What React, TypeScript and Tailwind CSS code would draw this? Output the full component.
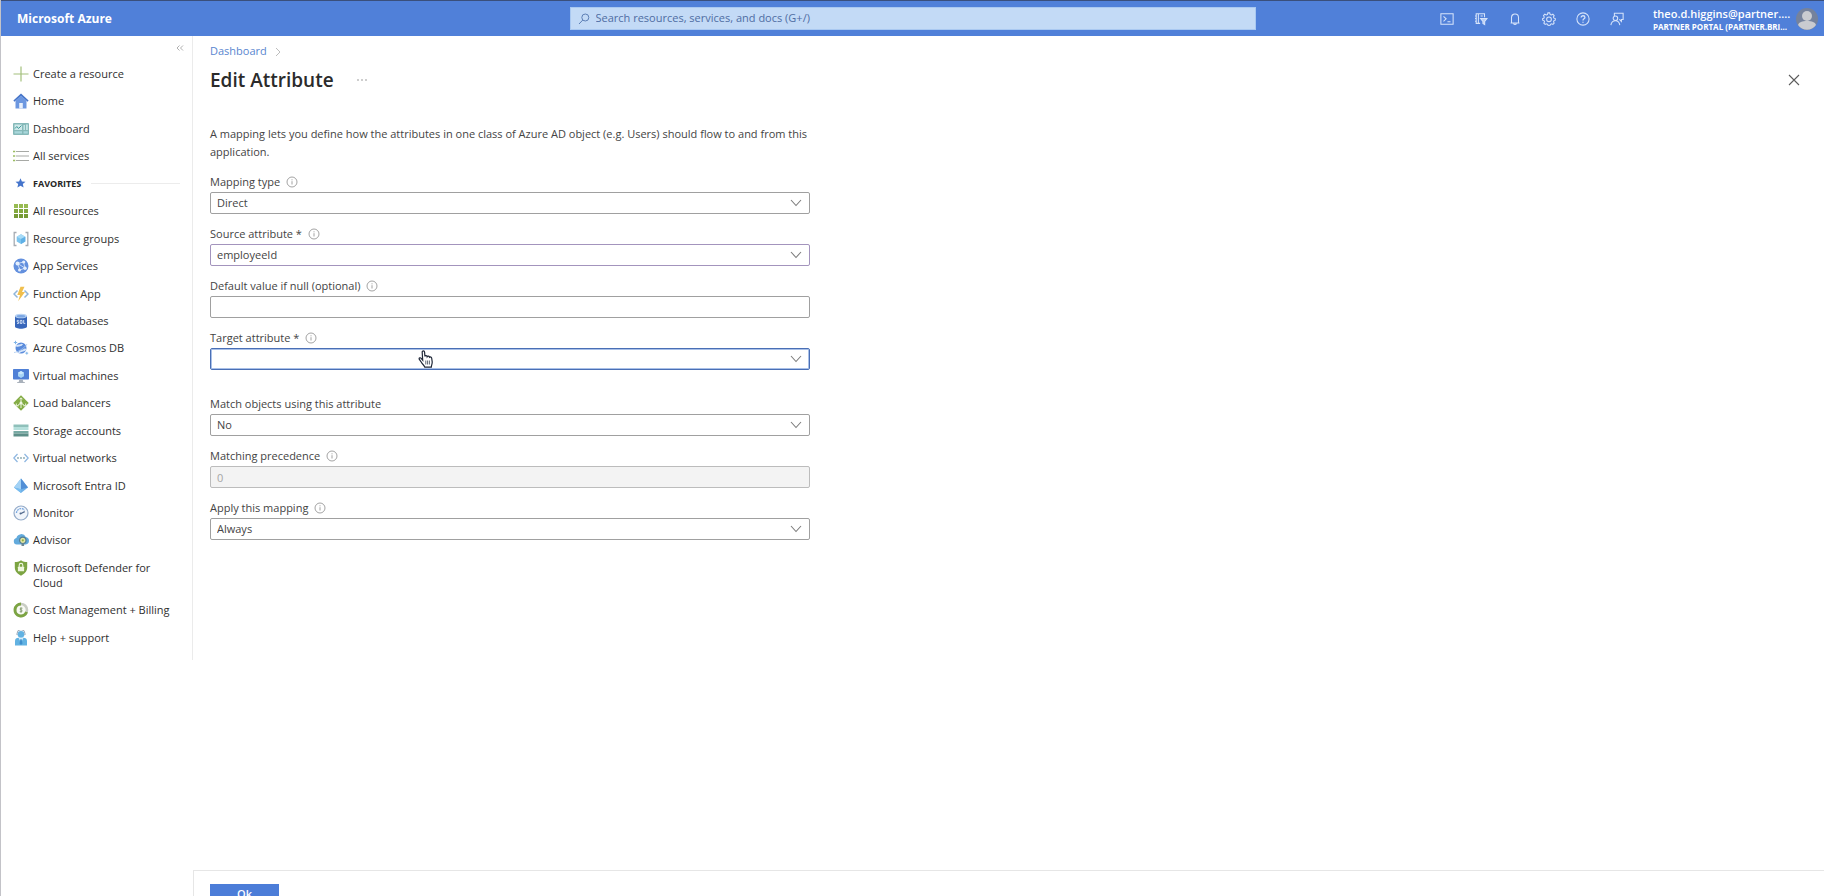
import type { ReactNode } from 'react';
import { clsx } from 'clsx';

const icon = 'block size-4 shrink-0';

const CreateIcon = () => (
  <svg viewBox="0 0 16 16" className={icon}>
    <path d="M8 .5v15M.5 8h15" stroke="#a3c07c" strokeWidth="1.2" fill="none" />
  </svg>
);

const HomeIcon = () => (
  <svg viewBox="0 0 16 16" className={icon}>
    <path d="M2.5 8h11v7.5h-11z" fill="#6c97e0" />
    <path d="M8 .5.4 7.6l1 1.2L8 3l6.6 5.8 1-1.2z" fill="#4674c8" />
    <path d="M8 2.6 3 7.3V9h10V7.3z" fill="#6c97e0" />
    <path d="M6.2 10h3.6v5.5H6.2z" fill="#e8effb" />
  </svg>
);

const DashboardIcon = () => (
  <svg viewBox="0 0 16 16" className={icon}>
    <rect x="0" y="2" width="16" height="12" rx="1" fill="#86b9b9" />
    <rect x="1.5" y="3.5" width="7.5" height="5.5" fill="#cfe9ea" />
    <path d="m2 7.5 1.8-2 1.7 2 3-3" stroke="#3f9a9a" strokeWidth="1" fill="none" />
    <path d="M10.5 4H12v5h-1.5zM13 3.500h1.800V9H13z" fill="#c8e6e6" />
    <path d="M1.5 10.3H9v2.2H1.500zM10.500 10.300h4.300v2.200h-4.300z" fill="#a9d8dc" />
  </svg>
);

const ServicesIcon = () => (
  <svg viewBox="0 0 16 16" className={icon}>
    <path d="M3 3.5h13M3 8h13M3 12.5h13" stroke="#a7a9a5" strokeWidth="1.2" />
    <path d="M0 3.5h2.200M0 8h2.200M0 12.500h2.200" stroke="#9bbd62" strokeWidth="1.6" />
  </svg>
);

const StarIcon = () => (
  <svg viewBox="0 0 16 16" className={icon}>
    <path d="m7.5 3.2 1.4 3.3 3.6.3-2.7 2.3.8 3.5-3.1-1.9-3.1 1.9.8-3.5-2.700-2.300 3.600-.3z" fill="#4675cc" />
  </svg>
);

const AllResourcesIcon = () => (
  <svg viewBox="0 0 16 16" className={icon}>
    <path d="M1 1h4v4H1zM6 1h4v4H6zM11 1h4v4h-4z" fill="#98bb52" />
    <path d="M1 6h4v4H1zM6 6h4v4H6zM11 6h4v4h-4z" fill="#83a83f" />
    <path d="M1 11h4v4H1zM6 11h4v4H6zM11 11h4v4h-4z" fill="#769a35" />
  </svg>
);

const ResourceGroupsIcon = () => (
  <svg viewBox="0 0 16 16" className={icon}>
    <path d="M3.5 1.5H1.200v13h2.300M12.500 1.500h2.300v13h-2.300" stroke="#a6abb2" strokeWidth="1.3" fill="none" />
    <path d="m8 3.300 4.300 2.400v4.800L8 12.900l-4.300-2.400V5.700z" fill="#7cc4ee" />
    <path d="m8 3.300 4.300 2.400L8 8.100 3.700 5.700z" fill="#a7dbf7" />
    <path d="M8 8.100v4.800l4.300-2.400V5.700z" fill="#5fb0e6" />
  </svg>
);

const AppServicesIcon = () => (
  <svg viewBox="0 0 16 16" className={icon}>
    <circle cx="8" cy="8" r="7.5" fill="#6390de" />
    <path d="m4.500 5.500 6-1.500 1.500 6-5 2zM4.500 5.500 12 10" stroke="#dce8fa" strokeWidth=".8" fill="none" />
    <circle cx="4.5" cy="5.5" r="2" fill="#e4eefc" />
    <circle cx="10.7" cy="4" r="1.6" fill="#e4eefc" />
    <circle cx="12" cy="10.2" r="1.7" fill="#e4eefc" />
    <circle cx="6.5" cy="12" r="1.5" fill="#e4eefc" />
  </svg>
);

const FunctionIcon = () => (
  <svg viewBox="0 0 16 16" className={icon}>
    <path d="M4.500 4.500 1 8l3.500 3.500M11.500 4.500 15 8l-3.500 3.500" stroke="#8fb5da" strokeWidth="1.5" fill="none" />
    <path d="M7.500.8h4L9 6h3l-6.800 9.200L7 9H4.300z" fill="#f0bf4e" />
  </svg>
);

const SqlIcon = () => (
  <svg viewBox="0 0 16 16" className={icon}>
    <path d="M2 3v10.500C2 14.900 4.700 15.700 8 15.700s6-.8 6-2.200V3z" fill="#3867bb" />
    <ellipse cx="8" cy="3" rx="6" ry="2.3" fill="#b9d3f3" />
    <ellipse cx="8" cy="3.2" rx="4.3" ry="1.3" fill="#7aa6e4" />
    <path d="M5.800 7.400H4.200v1.400h1.400v1.600H4M7.200 7.400h1.800v3H7.200zM10.700 7v3.400h1.600" stroke="#dce9fb" strokeWidth=".9" fill="none" />
  </svg>
);

const CosmosIcon = () => (
  <svg viewBox="0 0 16 16" className={icon}>
    <circle cx="8" cy="8" r="5.5" fill="#5a8bdc" />
    <path d="M3.200 6.200c2-1.500 5 .2 6-2.200M6 13c.3-2.800 4.500-1.500 6.800-4" stroke="#d5e5fa" strokeWidth="1.9" fill="none" />
    <path d="M1 12.500c3 0 11-4.500 13-8.500" stroke="#a7c6ee" strokeWidth=".8" fill="none" />
    <path d="M2.500.8v3.400M.8 2.500h3.400M13.800 11.800v2.800M12.400 13.200h2.800" stroke="#80b5e8" strokeWidth="1" />
  </svg>
);

const VmIcon = () => (
  <svg viewBox="0 0 16 16" className={icon}>
    <rect x="0" y="1" width="16" height="10.5" rx=".7" fill="#4f80d6" />
    <path d="m8 3 3 1.700v3.500L8 9.900 5 8.200V4.700z" fill="#a5d3f5" />
    <path d="m8 3 3 1.700-3 1.700-3-1.700z" fill="#cce9fc" />
    <path d="M6.300 11.500h3.400l.6 2.500h1.500v1H4.200v-1h1.500z" fill="#a9b1bb" />
  </svg>
);

const LoadBalancerIcon = () => (
  <svg viewBox="0 0 16 16" className={icon}>
    <path d="m8 .3 7.700 7.700L8 15.700.3 8z" fill="#84ac45" />
    <path d="M8 3v5M8 8l-3.500 2.500M8 8l3.500 2.500M8 8v5M6.500 4.300 8 2.800l1.500 1.500M3.300 8.500v2.300h2.400M12.700 8.500v2.300h-2.400" stroke="#eff6e2" strokeWidth="1" fill="none" />
    <circle cx="8" cy="8" r="1.5" fill="#eff6e2" />
  </svg>
);

const StorageIcon = () => (
  <svg viewBox="0 0 16 16" className={icon}>
    <path d="M.5 1.500h15V4H.5z" fill="#8fc0ba" />
    <path d="M.5 4h15v3H.5z" fill="#b6e0dc" />
    <path d="M.5 8h15v2.500H.5z" fill="#79aaa4" />
    <path d="M.5 10.500h15v3H.5z" fill="#5e8f89" />
  </svg>
);

const VnetIcon = () => (
  <svg viewBox="0 0 16 16" className={icon}>
    <path d="M4.500 4 .8 8l3.700 4M11.500 4l3.700 4-3.700 4" stroke="#8fb7e2" strokeWidth="1.3" fill="none" />
    <circle cx="5" cy="8" r=".9" fill="#86a7b0" />
    <circle cx="8" cy="8" r=".9" fill="#86a7b0" />
    <circle cx="11" cy="8" r=".9" fill="#86a7b0" />
  </svg>
);

const EntraIcon = () => (
  <svg viewBox="0 0 16 16" className={icon}>
    <path d="M8 .5 1 9.500 8 15l7-5.500z" fill="#6fb1e8" />
    <path d="M8 .5 1 9.500l7 1.800z" fill="#a3d2f5" />
    <path d="M8 .5v10.800l7-1.800z" fill="#528fd6" />
    <path d="m1 9.500 7 5.500v-3.700z" fill="#78bdf0" />
  </svg>
);

const MonitorIcon = () => (
  <svg viewBox="0 0 16 16" className={icon}>
    <circle cx="8" cy="8" r="7" fill="#f1f5fb" stroke="#94abc9" strokeWidth="1.2" />
    <path d="M3.500 8a4.500 4.500 0 0 1 8-2.700" stroke="#76a6df" strokeWidth="1.3" strokeDasharray="1.8 .8" fill="none" />
    <path d="m7.500 8.700 4.200-2.100" stroke="#51698c" strokeWidth="1.2" />
    <circle cx="7.5" cy="8.6" r="1" fill="#51698c" />
  </svg>
);

const AdvisorIcon = () => (
  <svg viewBox="0 0 16 16" className={icon}>
    <path d="M3.700 12.500a3.300 3.300 0 0 1-.3-6.500A5 5 0 0 1 12.800 5a3.800 3.800 0 0 1 0 7.500z" fill="#62aadc" />
    <circle cx="9.8" cy="8.3" r="3.2" fill="#e0e5a4" stroke="#527c93" strokeWidth="1.2" />
    <path d="M8.500 11.500h2.600V14H8.500z" fill="#6d8793" />
    <circle cx="9.8" cy="8.3" r="1.1" fill="#94af43" />
  </svg>
);

const DefenderIcon = () => (
  <svg viewBox="0 0 16 16" className={icon}>
    <path d="M8 .3c2 1.500 4 1.800 6.200 1.800v5.500c0 4-3.200 6.500-6.200 8.100-3-1.600-6.200-4.100-6.200-8.100V2.100C4 2.100 6 1.800 8 .3z" fill="#7ca442" />
    <path d="M6.200 7V5.200a1.800 1.800 0 0 1 3.600 0V7" stroke="#eef6df" strokeWidth="1.1" fill="none" />
    <rect x="4.9" y="6.7" width="6.2" height="4.6" rx=".5" fill="#eef6df" />
  </svg>
);

const CostIcon = () => (
  <svg viewBox="0 0 16 16" className={icon}>
    <circle cx="8" cy="8" r="6" fill="#f8faf4" stroke="#c9cdc4" strokeWidth="2.6" />
    <path d="M8 2a6 6 0 1 0 5.600 8.100" stroke="#7ca442" strokeWidth="2.9" fill="none" />
    <path d="M9.500 6.200H7.300v1.700h1.600v1.800H6.700M8 5.200v5.600" stroke="#7e946a" strokeWidth=".8" fill="none" />
  </svg>
);

const SupportIcon = () => (
  <svg viewBox="0 0 16 16" className={icon}>
    <circle cx="8" cy="4.3" r="3.4" fill="#62b2e2" />
    <path d="M4 5V3.600a4 4 0 0 1 8 0V5" stroke="#9aa6b4" strokeWidth="1" fill="none" />
    <path d="M2 15.500V11c0-2.200 1.500-3.300 3.500-3.300h5c2 0 3.500 1.100 3.500 3.300v4.500z" fill="#62b2e2" />
    <path d="m5.500 7.700 2.500 5 2.500-5z" fill="#d8effb" />
    <path d="m7.300 9.200-.8 4.300L8 15l1.500-1.500-.8-4.300z" fill="#3e8fcd" />
  </svg>
);

const InfoIcon = () => (
  <svg viewBox="0 0 12 12" className="size-3" aria-hidden="true">
    <circle cx="6" cy="6" r="5" fill="none" stroke="#8c8c8c" strokeWidth=".8" />
    <path d="M6 5.200v3.300M6 3.300v1" stroke="#8c8c8c" strokeWidth=".8" />
  </svg>
);

interface NavItem {
  label: string;
  icon: ReactNode;
}

const mainLinks: NavItem[] = [
  { label: 'Create a resource', icon: <CreateIcon /> },
  { label: 'Home', icon: <HomeIcon /> },
  { label: 'Dashboard', icon: <DashboardIcon /> },
  { label: 'All services', icon: <ServicesIcon /> },
];

const favorites: NavItem[] = [
  { label: 'All resources', icon: <AllResourcesIcon /> },
  { label: 'Resource groups', icon: <ResourceGroupsIcon /> },
  { label: 'App Services', icon: <AppServicesIcon /> },
  { label: 'Function App', icon: <FunctionIcon /> },
  { label: 'SQL databases', icon: <SqlIcon /> },
  { label: 'Azure Cosmos DB', icon: <CosmosIcon /> },
  { label: 'Virtual machines', icon: <VmIcon /> },
  { label: 'Load balancers', icon: <LoadBalancerIcon /> },
  { label: 'Storage accounts', icon: <StorageIcon /> },
  { label: 'Virtual networks', icon: <VnetIcon /> },
  { label: 'Microsoft Entra ID', icon: <EntraIcon /> },
  { label: 'Monitor', icon: <MonitorIcon /> },
  { label: 'Advisor', icon: <AdvisorIcon /> },
  { label: 'Microsoft Defender for Cloud', icon: <DefenderIcon /> },
  { label: 'Cost Management + Billing', icon: <CostIcon /> },
  { label: 'Help + support', icon: <SupportIcon /> },
];

const headerActions: { label: string; shape: ReactNode }[] = [
  {
    label: 'Cloud Shell',
    shape: <path d="M1 2h14v12H1zM4 5l3 2.800L4 10.600M8.500 11.200H12" />,
  },
  {
    label: 'Directories + subscriptions',
    shape: (
      <>
        <path d="M7 13H2.500V2H12v4M5 2v11M1.200 4.500h2M1.200 7.500h2M1.200 10.500h2M7.500 4.500H10" />
        <path d="M7.500 7.500h7.300l-2.600 3.300v3.600l-2-1.300v-2.300z" fill="#b7cdf3" />
      </>
    ),
  },
  {
    label: 'Notifications',
    shape: <path d="M3 12.500h10M4 12.500V6.300a4 4 0 0 1 8 0v6.200M6.500 12.800a1.500 1.500 0 0 0 3 0" />,
  },
  {
    label: 'Settings',
    shape: (
      <>
        <path d="m6.700 1-.5 1.900-1.300.5-1.700-.9-1.500 1.700.9 1.600-.6 1.300L.7 7.500v1.800l1.600.5.6 1.300-.8 1.600 1.500 1.500 1.600-.7 1.300.6.6 1.500H9l.6-1.500 1.300-.6 1.600.7 1.400-1.500-.7-1.600.5-1.300 1.500-.5V7.500L13.700 7l-.6-1.300.8-1.600-1.500-1.600-1.600.9-1.400-.5L8.800 1z" />
        <circle cx="8" cy="8.3" r="2.7" />
      </>
    ),
  },
  {
    label: 'Help',
    shape: (
      <>
        <circle cx="8" cy="8" r="7" />
        <path d="M5.900 6.300c0-2.800 4.300-2.600 4.300-.1C10.200 7.800 8 7.800 8 9.600M8 11v1.400" strokeWidth="1.5" />
      </>
    ),
  },
  {
    label: 'Feedback',
    shape: (
      <>
        <path d="M5 4.500v-3h10v7h-2v2.300L10.700 8.500" />
        <circle cx="6.2" cy="7.2" r="2.6" />
        <path d="M1 15c.5-3.300 2.500-5 5.200-5s4.500 1.700 5 5" />
      </>
    ),
  },
];

function TopBar() {
  return (
    <header className="flex h-9 shrink-0 items-center border-t border-[#3a4f7c] bg-[#5080d9] text-white">
      <div className="flex-1">
        <span className="ml-4 text-[12px] font-bold">Microsoft Azure</span>
      </div>
      <div className="flex h-[23px] w-[686px] items-center border border-[#a9c8f1] bg-[#c3daf6] pl-[7px]">
        <svg viewBox="0 0 12 12" className="size-3" aria-hidden="true">
          <circle cx="7.3" cy="4.5" r="3.5" fill="none" stroke="#5d7fb5" />
          <path d="M4.800 7 1 11" stroke="#5d7fb5" />
        </svg>
        <input
          type="text"
          aria-label="Search"
          placeholder="Search resources, services, and docs (G+/)"
          className="ml-1.5 min-w-0 flex-1 bg-transparent text-[11px] outline-none placeholder:text-[#4f6da3]"
        />
      </div>
      <div className="flex flex-1 items-center justify-end">
        <div className="mr-7 flex gap-[18px]">
          {headerActions.map((action) => (
            <button key={action.label} type="button" aria-label={action.label} className="flex size-4 items-center justify-center">
              <svg viewBox="0 0 16 16" className="size-[14px]" fill="none" stroke="#d6e3fa" strokeWidth="1.2">
                {action.shape}
              </svg>
            </button>
          ))}
        </div>
        <button type="button" className="flex items-center pr-1.5 text-left">
          <span className="flex w-[143px] flex-col pt-0.5 whitespace-nowrap">
            <span className="text-[11px] leading-[14px] font-semibold">theo.d.higgins@partner....</span>
            <span className="text-[8px] leading-3 font-bold">PARTNER PORTAL (PARTNER.BRI...</span>
          </span>
          <svg viewBox="0 0 22 22" className="size-[22px]" aria-hidden="true">
            <circle cx="11" cy="11" r="11" fill="#75829c" />
            <circle cx="11" cy="8" r="5" fill="#c9cbd0" />
            <path d="M2 17c1-3 4-4 9-4s8 1 9 4a11 11 0 0 1-18 0z" fill="#c9cbd0" />
          </svg>
        </button>
      </div>
    </header>
  );
}

function NavLink({ item }: { item: NavItem }) {
  return (
    <li>
      <a href="#" className="flex gap-1 leading-[15px] text-[#303030]">
        <span className="h-[15px]">{item.icon}</span>
        <span>{item.label}</span>
      </a>
    </li>
  );
}

function Sidebar() {
  return (
    <nav className="h-[624px] w-48 shrink-0 border-r border-[#ebebeb]">
      <div className="flex h-[30px] items-start justify-end pt-2 pr-2">
        <button type="button" aria-label="Collapse menu">
          <svg viewBox="0 0 8 8" className="size-2" fill="none" stroke="#b0b0b0">
            <path d="M3.500 1.500 1 4l2.500 2.500M7 1.500 4.500 4 7 6.500" />
          </svg>
        </button>
      </div>
      <ul className="flex h-[579px] flex-col justify-between pr-3 pl-3 text-[11px]">
        {mainLinks.map((item) => (
          <NavLink key={item.label} item={item} />
        ))}
        <li className="flex h-[15px] items-center gap-1">
          <StarIcon />
          <span className="text-[9px] font-bold text-[#262626]">FAVORITES</span>
          <span className="ml-1.5 h-px flex-1 bg-[#ececec]" />
        </li>
        {favorites.map((item) => (
          <NavLink key={item.label} item={item} />
        ))}
      </ul>
    </nav>
  );
}

interface FieldProps {
  id: string;
  label: string;
  info?: boolean;
  children: ReactNode;
}

function Field({ id, label, info = true, children }: FieldProps) {
  return (
    <div className="flex flex-col gap-0.5">
      <div className="flex h-4 items-center gap-1.5">
        <label htmlFor={id}>{label}</label>
        {info && <InfoIcon />}
      </div>
      {children}
    </div>
  );
}

interface SelectBoxProps {
  id: string;
  value: string;
  tone?: 'default' | 'visited' | 'focused';
}

function SelectBox({ id, value, tone = 'default' }: SelectBoxProps) {
  return (
    <div className="relative">
      <select
        id={id}
        defaultValue={value}
        className={clsx(
          'block h-[22px] w-full appearance-none rounded-[2px] border bg-white px-1.5 text-[11px] outline-none',
          tone === 'default' && 'border-[#a0a0a0]',
          tone === 'visited' && 'border-[#a394bd]',
          tone === 'focused' && 'border-[#4a6fb5] ring-1 ring-[#a9c0e8] ring-inset'
        )}
      >
        <option value={value}>{value}</option>
      </select>
      <svg viewBox="0 0 12 12" className="pointer-events-none absolute top-[5px] right-2 size-3" aria-hidden="true">
        <path d="m1 3 5 5.500L11 3" fill="none" stroke="#7d7d7d" strokeWidth="1.1" />
      </svg>
    </div>
  );
}

function HandPointer() {
  return (
    <svg viewBox="0 0 16 19" className="pointer-events-none absolute top-0.5 left-[208px] h-[19px] w-4" aria-hidden="true">
      <path
        d="M4.200 2.200c0-1.700 2.300-1.700 2.400 0l.3 4.200c.3-1 2.200-.9 2.300.2.500-.8 2.200-.5 2.300.6.8-.6 2.100 0 2.200 1.100l.5 3.600c.2 2-.8 3-.9 5.300H6.800c-.3-1.700-2.400-3-3.300-4.700L1.200 9.200c-.5-1.200 1.100-2 2-.9l1.500 1.900z"
        fill="#fff"
        stroke="#1f2737"
        strokeWidth="1.2"
      />
      <path d="M7.800 10.500v4M9.600 10.500v4M11.400 10.500v4" stroke="#4b5260" strokeWidth=".9" />
    </svg>
  );
}

function AttributeForm() {
  return (
    <form id="attribute-form" className="mt-[13px] flex w-[600px] max-w-full flex-col gap-3">
      <Field id="mapping-type" label="Mapping type">
        <SelectBox id="mapping-type" value="Direct" />
      </Field>
      <Field id="source" label="Source attribute *">
        <SelectBox id="source" value="employeeId" tone="visited" />
      </Field>
      <Field id="default-value" label="Default value if null (optional)">
        <input id="default-value" type="text" className="h-[22px] rounded-[2px] border border-[#a0a0a0] px-1.5 text-[11px]" />
      </Field>
      <Field id="target" label="Target attribute *">
        <div className="relative">
          <SelectBox id="target" value="" tone="focused" />
          <HandPointer />
        </div>
      </Field>
      <div className="mt-[14px] flex flex-col gap-3">
        <Field id="match" label="Match objects using this attribute" info={false}>
          <SelectBox id="match" value="No" />
        </Field>
        <Field id="precedence" label="Matching precedence">
          <input
            id="precedence"
            type="text"
            disabled
            defaultValue="0"
            className="h-[22px] rounded-[2px] border border-[#bcbcbc] bg-[#f3f3f3] px-1.5 text-[11px] text-[#a6a6a6]"
          />
        </Field>
        <Field id="apply" label="Apply this mapping">
          <SelectBox id="apply" value="Always" />
        </Field>
      </div>
    </form>
  );
}

export default function App() {
  return (
    <div className="flex h-screen flex-col overflow-hidden border-l border-[#c3c3c8] bg-white font-['Open_Sans','Noto_Sans',sans-serif] text-[11px] text-[#444]">
      <TopBar />
      <div className="flex min-h-0 flex-1">
        <Sidebar />
        <div className="flex min-w-0 flex-1 flex-col">
          <main className="min-h-0 flex-1 pr-6 pl-[17px]">
            <div className="flex h-[31px] items-center gap-2">
              <a href="#" className="text-[#5a86cf]">Dashboard</a>
              <svg viewBox="0 0 6 10" className="h-2.5 w-1.5" aria-hidden="true">
                <path d="m1 1 4 4-4 4" fill="none" stroke="#b5b5b5" strokeWidth=".9" />
              </svg>
            </div>
            <div className="flex h-[26px] items-center">
              <h1 className="text-[19px] leading-[26px] font-semibold text-[#2b2b2b]">Edit Attribute</h1>
              <button type="button" aria-label="More" className="ml-[22px]">
                <svg viewBox="0 0 12 4" className="h-1 w-3" fill="#8f8f8f">
                  <circle cx="2" cy="2" r=".8" />
                  <circle cx="6" cy="2" r=".8" />
                  <circle cx="10" cy="2" r=".8" />
                </svg>
              </button>
              <button type="button" aria-label="Close" className="ml-auto">
                <svg viewBox="0 0 12 12" className="size-3" fill="none" stroke="#5c5c5c" strokeWidth="1.1">
                  <path d="m1 1 10 10M11 1 1 11" />
                </svg>
              </button>
            </div>
            <p className="mt-8 w-[600px] max-w-full leading-[18px]">
              A mapping lets you define how the attributes in one class of Azure AD object (e.g. Users) should flow to and from this application.
            </p>
            <AttributeForm />
          </main>
          <footer className="h-[26px] shrink-0 overflow-hidden border-t border-l border-[#e6e6e6] pt-[13px] pl-4">
            <button type="submit" form="attribute-form" className="h-5 w-[69px] bg-[#4c7dd8] font-semibold text-white">
              Ok
            </button>
          </footer>
        </div>
      </div>
    </div>
  );
}
